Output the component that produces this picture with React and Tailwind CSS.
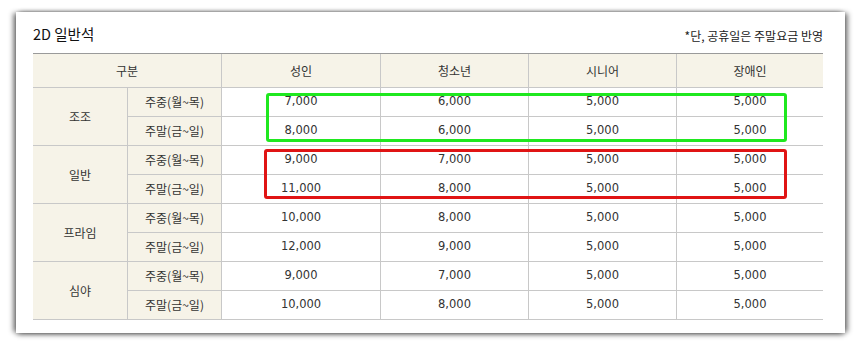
import React from 'react';

const groups = [
  { name: '조조', rows: [['7,000', '6,000', '5,000', '5,000'], ['8,000', '6,000', '5,000', '5,000']] },
  { name: '일반', rows: [['9,000', '7,000', '5,000', '5,000'], ['11,000', '8,000', '5,000', '5,000']] },
  { name: '프라임', rows: [['10,000', '8,000', '5,000', '5,000'], ['12,000', '9,000', '5,000', '5,000']] },
  { name: '심야', rows: [['9,000', '7,000', '5,000', '5,000'], ['10,000', '8,000', '5,000', '5,000']] },
];

const days = ['주중(월~목)', '주말(금~일)'];
const heads = ['성인', '청소년', '시니어', '장애인'];

const App = () => {
  return (
    <div
      className="w-[861px] h-[349px] bg-white pt-[12px] pl-[16px] text-[#333]"
      style={{ fontFamily: '"Noto Sans CJK KR", "Noto Sans", sans-serif' }}
    >
      {/* Paper card */}
      <div className="w-[829px] h-[321px] bg-white pl-[17px] pr-[22px] shadow-[-4px_0_5px_-1px_rgba(0,0,0,0.45),4px_0_5px_-1px_rgba(0,0,0,0.45),0_3px_5px_-1px_rgba(0,0,0,0.4),0_-2px_4px_-2px_rgba(0,0,0,0.3)]">
        {/* Title row */}
        <div className="h-[41px] flex items-center justify-between pt-[3px]">
          <h2 className="text-[14.5px] text-[#111] font-normal leading-none">2D 일반석</h2>
          <p className="text-[12px] text-[#222] leading-none pt-[4px]">*단, 공휴일은 주말요금 반영</p>
        </div>

        {/* Price table */}
        <div className="relative">
          <div className="grid grid-cols-[94px_94px_159px_148px_148px_147px] grid-rows-[34px_repeat(8,29px)] border-t border-[#9a9a9a] text-[12px]">
            <div className="col-span-2 bg-[#f6f3e8] border-b border-[#c8c8c8] flex items-center justify-center">구분</div>
            {heads.map((h) => (
              <div key={h} className="bg-[#f6f3e8] border-b border-l border-[#c8c8c8] flex items-center justify-center">
                {h}
              </div>
            ))}

            {groups.map((g) => (
              <React.Fragment key={g.name}>
                <div className="row-span-2 bg-[#f6f3e8] border-b border-[#c8c8c8] flex items-center justify-center">
                  {g.name}
                </div>
                {g.rows.map((r, i) => (
                  <React.Fragment key={i}>
                    <div className={`bg-[#f6f3e8] border-b border-l border-[#c8c8c8] flex items-center justify-center ${i === 0 ? 'col-start-2' : ''}`}>
                      {days[i]}
                    </div>
                    {r.map((v, j) => (
                      <div key={j} className="border-b border-l border-[#c8c8c8] flex items-center justify-center" style={{ fontFamily: '"DejaVu Sans", sans-serif', fontSize: '11.5px' }}>
                        {v}
                      </div>
                    ))}
                  </React.Fragment>
                ))}
              </React.Fragment>
            ))}
          </div>

          {/* Highlight boxes */}
          <div className="absolute left-[233px] top-[40px] w-[521px] h-[49px] border-[3px] border-[#1fe81f] rounded-[3px]" />
          <div className="absolute left-[231px] top-[96px] w-[523px] h-[50px] border-[3px] border-[#e01414] rounded-[3px]" />
        </div>
      </div>
    </div>
  );
};

export default App;
